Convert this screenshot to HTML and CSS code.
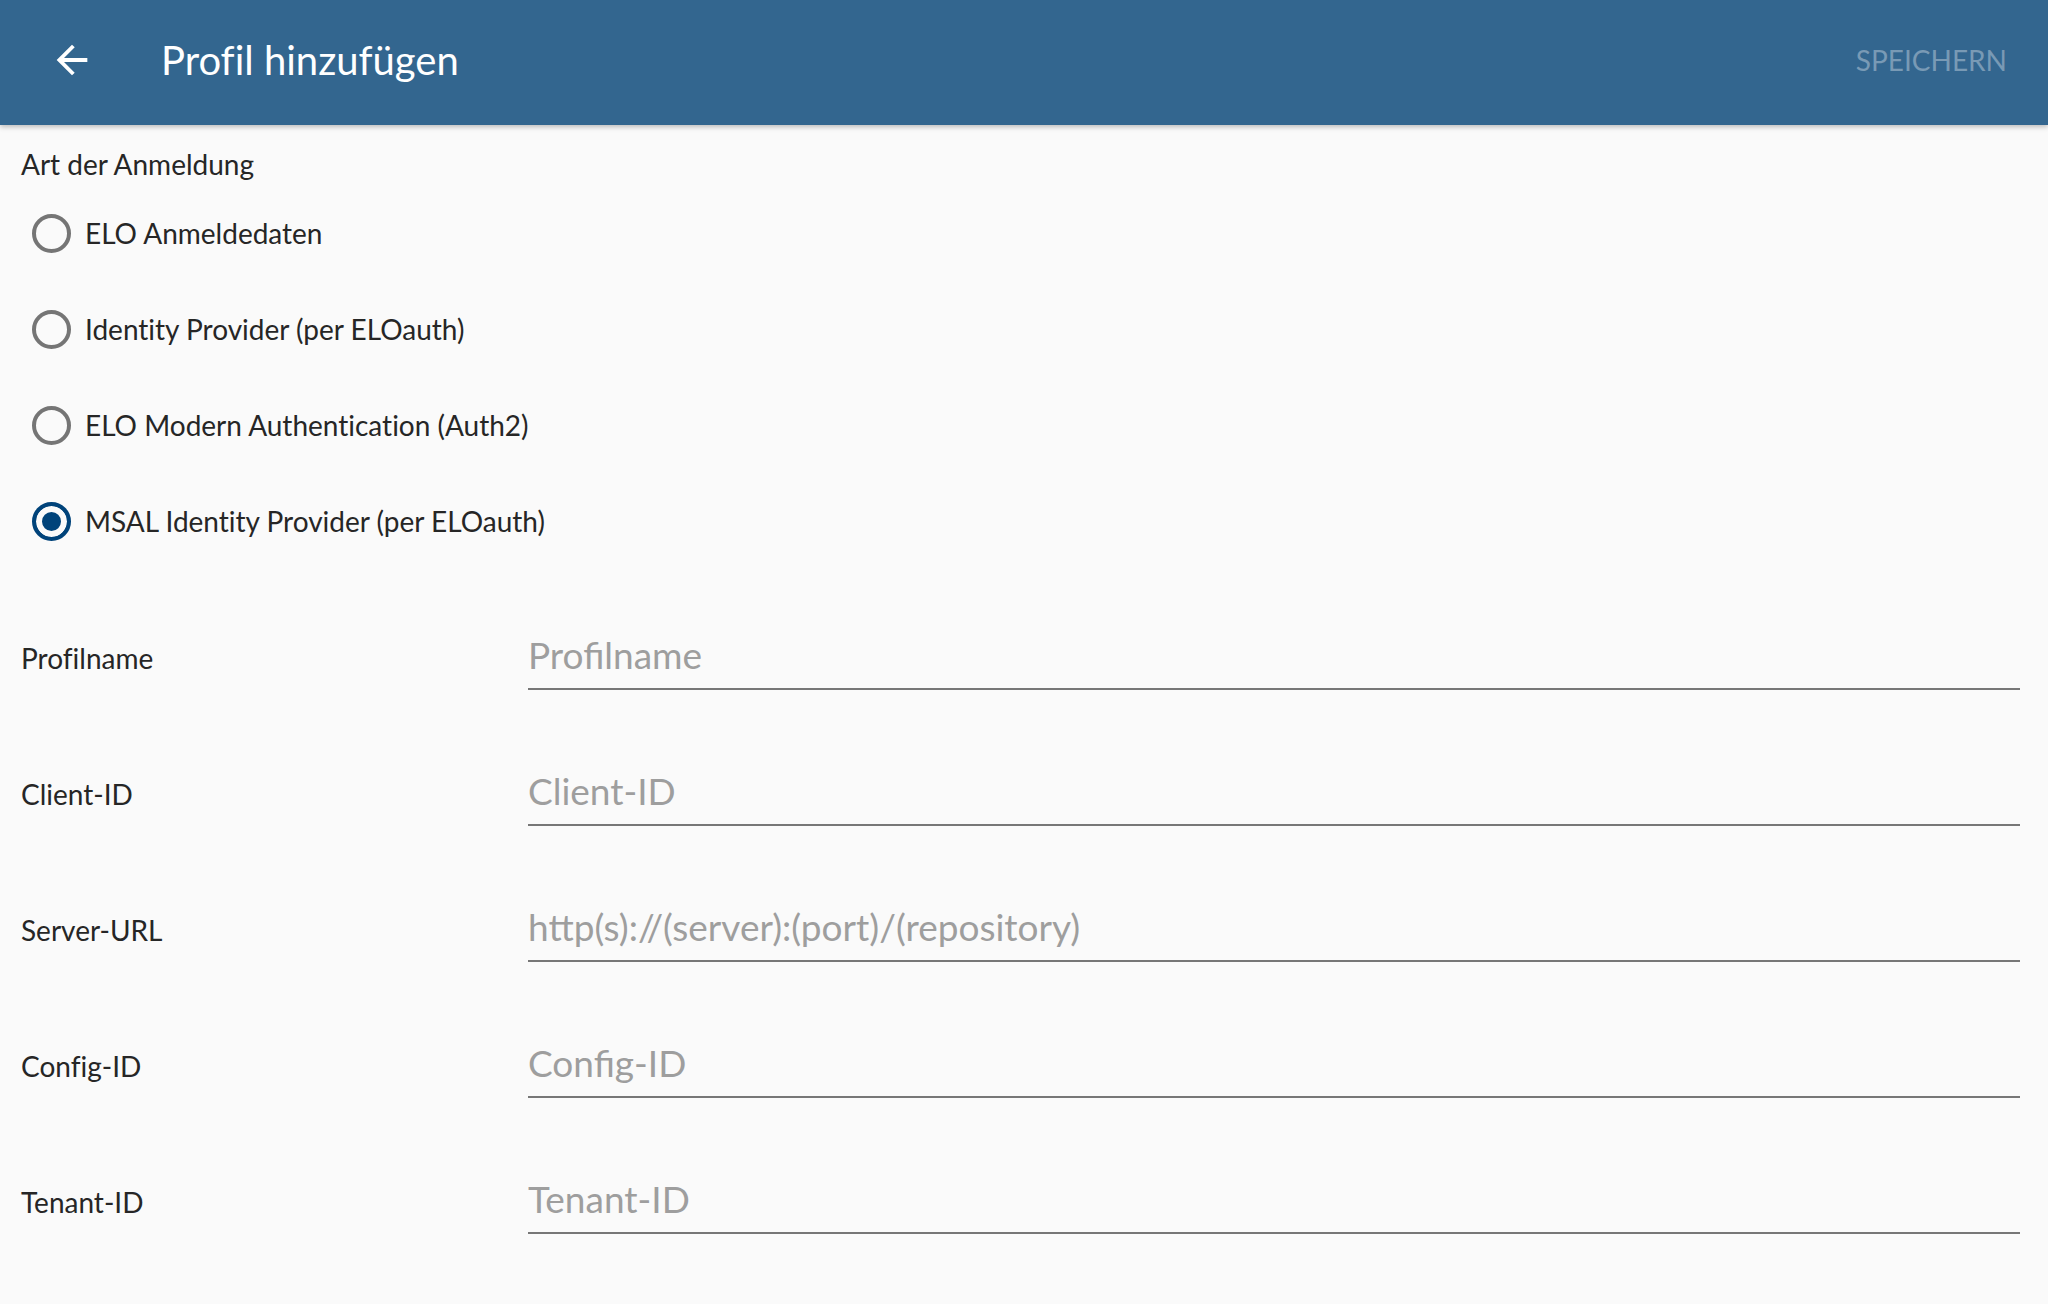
FILE: index.html
```html
<!DOCTYPE html>
<html lang="de">
<head>
    <meta charset="utf-8">
    <title>Profil hinzufügen</title>
    <link rel="stylesheet" href="styles.css">
</head>
<body>
    <header class="toolbar">
        <button class="back" aria-label="Zurück">
            <svg viewBox="0 0 24 24"><path d="M20 11H7.83l5.59-5.59L12 4l-8 8 8 8 1.41-1.41L7.83 13H20v-2z"/></svg>
        </button>
        <h1 class="title">Profil hinzufügen</h1>
        <button class="save" disabled>Speichern</button>
    </header>
    <main class="content">
        <div class="section-label">Art der Anmeldung</div>
        <div class="radio-group">
            <label class="radio"><input type="radio" name="auth"><span class="ring"></span>ELO Anmeldedaten</label>
            <label class="radio"><input type="radio" name="auth"><span class="ring"></span>Identity Provider (per ELOauth)</label>
            <label class="radio"><input type="radio" name="auth"><span class="ring"></span>ELO Modern Authentication (Auth2)</label>
            <label class="radio"><input type="radio" name="auth" checked><span class="ring"></span>MSAL Identity Provider (per ELOauth)</label>
        </div>
        <div class="fields">
            <div class="field">
                <label for="profilname">Profilname</label>
                <input id="profilname" type="text" placeholder="Profilname">
            </div>
            <div class="field">
                <label for="client-id">Client-ID</label>
                <input id="client-id" type="text" placeholder="Client-ID">
            </div>
            <div class="field">
                <label for="server-url">Server-URL</label>
                <input id="server-url" type="text" placeholder="http(s)://(server):(port)/(repository)">
            </div>
            <div class="field">
                <label for="config-id">Config-ID</label>
                <input id="config-id" type="text" placeholder="Config-ID">
            </div>
            <div class="field">
                <label for="tenant-id">Tenant-ID</label>
                <input id="tenant-id" type="text" placeholder="Tenant-ID">
            </div>
        </div>
    </main>
</body>
</html>
```
FILE: styles.css
```css
* {
    box-sizing: border-box;
}

html, body {
    margin: 0;
    height: 100%;
}

body {
    background-color: #fafafa;
    font-family: Lato, "Open Sans", sans-serif;
    font-variant-ligatures: none;
    color: #262626;
}

/* toolbar */
.toolbar {
    position: relative;
    z-index: 1;
    height: 125px;
    display: flex;
    align-items: center;
    padding: 0 41px 5px 49px;
    background-color: #33668f;
    box-shadow: 0 2px 5px rgba(0, 0, 0, 0.25);
}

.back {
    width: 46px;
    height: 46px;
    padding: 0;
    border: none;
    background: transparent;
    fill: #ffffff;
}
.back svg {
    display: block;
    width: 46px;
    height: 46px;
}

.title {
    flex: 1;
    margin: 0 0 0 66px;
    font-size: 40px;
    font-weight: 400;
    color: #ffffff;
}

.save {
    padding: 0;
    border: none;
    background: transparent;
    font-family: inherit;
    font-size: 28px;
    text-transform: uppercase;
    color: rgba(255, 255, 255, 0.35);
}

/* form */
.content {
    padding: 0 28px 0 21px;
}

.section-label {
    margin-top: 17px;
    font-size: 28px;
    line-height: 44px;
}

.radio-group {
    margin-top: -1px;
}

.radio {
    display: flex;
    align-items: center;
    gap: 14px;
    height: 96px;
    padding-left: 11px;
    font-size: 28px;
}
.radio input {
    display: none;
}
.ring {
    width: 39px;
    height: 39px;
    border: 4px solid #757575;
    border-radius: 50%;
}
.radio input:checked + .ring {
    border-color: #00437a;
    background-color: #00437a;
    box-shadow: inset 0 0 0 6px #fafafa;
}

.fields {
    margin-top: 51px;
}

.field {
    display: flex;
    align-items: baseline;
    margin-bottom: 66px;
}
.field label {
    flex: none;
    width: 507px;
    font-size: 28px;
}
.field input {
    flex: 1;
    height: 70px;
    padding: 0;
    border: none;
    border-bottom: 2px solid #777777;
    background: transparent;
    font-family: inherit;
    font-size: 37px;
    color: #262626;
    outline: none;
}
.field input::placeholder {
    color: #9e9e9e;
}
```
